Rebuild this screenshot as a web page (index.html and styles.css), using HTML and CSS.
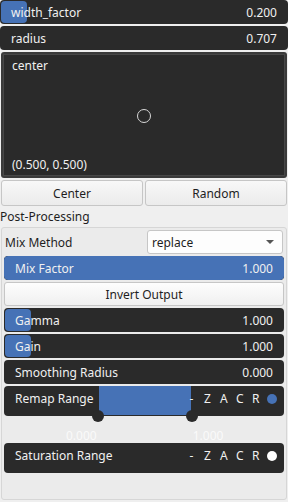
FILE: index.html
```html
<!DOCTYPE html>
<html lang="en">
<head>
    <meta charset="UTF-8">
    <meta name="viewport" content="width=device-width, initial-scale=1.0">
    <title>Pattern Settings</title>
    <link rel="stylesheet" href="styles.css">
</head>
<body>
    <div class="slider">
        <div class="fill" style="width: 26px"></div>
        <span class="name">width_factor</span>
        <span class="val">0.200</span>
    </div>
    <div class="slider">
        <span class="name">radius</span>
        <span class="val">0.707</span>
    </div>

    <div class="pad">
        <div class="pad-inner">
            <span class="pad-label">center</span>
            <div class="pad-dot"></div>
            <span class="pad-coords">(0.500, 0.500)</span>
        </div>
    </div>

    <div class="btn-row">
        <button class="btn">Center</button>
        <button class="btn">Random</button>
    </div>

    <div class="section">Post-Processing</div>

    <div class="panel">
        <div class="combo-row">
            <span class="combo-label">Mix Method</span>
            <div class="combo">
                <span>replace</span>
                <span class="arrow"></span>
            </div>
        </div>

        <div class="slider full">
            <div class="fill" style="width: 100%"></div>
            <span class="name">Mix Factor</span>
            <span class="val">1.000</span>
        </div>

        <button class="btn wide">Invert Output</button>

        <div class="slider">
            <div class="fill" style="width: 26px"></div>
            <span class="name">Gamma</span>
            <span class="val">1.000</span>
        </div>
        <div class="slider">
            <div class="fill" style="width: 26px"></div>
            <span class="name">Gain</span>
            <span class="val">1.000</span>
        </div>
        <div class="slider">
            <span class="name">Smoothing Radius</span>
            <span class="val">0.000</span>
        </div>

        <div class="range">
            <div class="range-bar">
                <span class="name">Remap Range</span>
                <div class="range-fill"></div>
                <div class="flags">
                    <span>-</span><span>Z</span><span>A</span><span>C</span><span>R</span>
                    <span class="dot blue"></span>
                </div>
                <div class="handle left"></div>
                <div class="handle right"></div>
            </div>
            <div class="range-nums">
                <span>0.000</span>
                <span>1.000</span>
            </div>
        </div>

        <div class="range">
            <div class="range-bar">
                <span class="name">Saturation Range</span>
                <div class="flags">
                    <span>-</span><span>Z</span><span>A</span><span>C</span><span>R</span>
                    <span class="dot white"></span>
                </div>
            </div>
        </div>
    </div>
</body>
</html>
```

FILE: styles.css
```css
body {
    margin: 0;
    width: 288px;
    background-color: #efefef;
    font-family: "Noto Sans", sans-serif;
    font-size: 12px;
    color: #f0f0f0;
}

.slider {
    position: relative;
    height: 24px;
    margin-bottom: 2px;
    background-color: #2a2a2a;
    border-radius: 4px;
    display: flex;
    align-items: center;
    justify-content: space-between;
    padding: 0 11px;
    overflow: hidden;
}

.slider .fill {
    position: absolute;
    left: 1px;
    top: 1px;
    bottom: 1px;
    background-color: #4672b6;
    border-radius: 4px;
}

.slider.full .fill {
    left: 0;
    top: 0;
    bottom: 0;
}

.slider .name,
.slider .val {
    position: relative;
}

.pad {
    margin: 0 1px 2px 1px;
    height: 126px;
    box-sizing: border-box;
    background-color: #3a3a3a;
    border-radius: 3px;
    padding: 2px;
}

.pad-inner {
    position: relative;
    height: 100%;
    background-color: #2a2a2a;
    border: 1px solid #474747;
    box-sizing: border-box;
    display: flex;
    flex-direction: column;
    justify-content: space-between;
    padding: 2px 8px 2px 8px;
}

.pad-dot {
    position: absolute;
    left: 133px;
    top: 54px;
    width: 12px;
    height: 12px;
    border: 1px solid #d8d8d8;
    border-radius: 50%;
}

.btn-row {
    display: flex;
    gap: 2px;
    margin: 0 1px;
}

.btn {
    flex: 1;
    height: 26px;
    font-family: "Noto Sans", sans-serif;
    font-size: 12px;
    color: #1e1e1e;
    background: linear-gradient(#f8f8f8, #ebebeb);
    border: 1px solid #c6c6c6;
    border-radius: 3px;
    padding: 0;
}

.section {
    color: #1e1e1e;
    height: 21px;
    line-height: 22px;
}

.panel {
    margin: 0 1px;
    height: 273px;
    background-color: #ebebeb;
    border: 1px solid #d6d6d6;
    border-radius: 3px;
    padding: 2px 2px 0 2px;
    box-sizing: border-box;
}

.combo-row {
    display: flex;
    align-items: center;
    height: 24px;
    margin-bottom: 2px;
    color: #1e1e1e;
}

.combo-label {
    width: 142px;
    padding-left: 1px;
}

.combo {
    flex: 1;
    height: 24px;
    box-sizing: border-box;
    background-color: #fdfdfd;
    border: 1px solid #c6c6c6;
    border-radius: 3px;
    display: flex;
    align-items: center;
    justify-content: space-between;
    padding: 0 8px 0 4px;
    margin-right: 1px;
}

.arrow {
    width: 0;
    height: 0;
    border-left: 4px solid transparent;
    border-right: 4px solid transparent;
    border-top: 4px solid #555;
}

.btn.wide {
    display: block;
    width: 100%;
    height: 24px;
    margin-bottom: 2px;
    background: linear-gradient(#fdfdfd, #f0f0f0);
}

.range {
    margin-bottom: 2px;
}

.range-bar {
    position: relative;
    height: 30px;
    box-sizing: border-box;
    background-color: #2a2a2a;
    border-radius: 4px;
    display: flex;
    align-items: center;
    justify-content: space-between;
    padding: 0 7px 5px 11px;
}

.range-fill {
    position: absolute;
    left: 95px;
    top: 0;
    width: 92px;
    bottom: 1px;
    background-color: #4672b6;
}

.range .name,
.range .flags {
    position: relative;
}

.flags {
    display: flex;
    align-items: center;
    gap: 9px;
}

.flags span {
    width: 7px;
    text-align: center;
}

.flags .dot {
    width: 10px;
    height: 10px;
    border-radius: 50%;
    margin-left: -1px;
}

.dot.blue {
    background-color: #4672b6;
}

.dot.white {
    background-color: #ffffff;
}

.handle {
    position: absolute;
    top: 24px;
    width: 12px;
    height: 12px;
    border-radius: 50%;
    background-color: #2a2a2a;
}

.handle.left {
    left: 88px;
}

.handle.right {
    left: 182px;
}

.range-nums {
    height: 25px;
    display: flex;
    align-items: flex-end;
    line-height: 10px;
    color: #fafafa;
    padding-left: 62px;
    gap: 96px;
}
```
